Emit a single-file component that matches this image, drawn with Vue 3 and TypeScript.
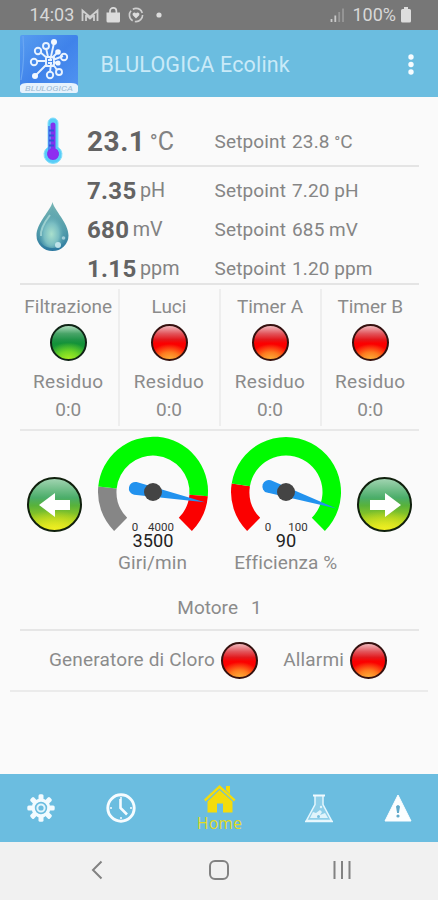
<script setup lang="ts">
interface Reading { value: string; unit: string; setpoint: string }
interface Timer { name: string; on: boolean; left: string }
interface Segment { from: number; to: number; color: string }
interface Gauge { label: string; max: number; value: number; zeroX: number; maxX: number; segments: Segment[] }

const readings: Reading[] = [
  { value: '7.35', unit: 'pH', setpoint: '7.20' },
  { value: '680', unit: 'mV', setpoint: '685' },
  { value: '1.15', unit: 'ppm', setpoint: '1.20' },
]

const timers: Timer[] = [
  { name: 'Filtrazione', on: true, left: '0:0' },
  { name: 'Luci', on: false, left: '0:0' },
  { name: 'Timer A', on: false, left: '0:0' },
  { name: 'Timer B', on: false, left: '0:0' },
]

const gauges: Gauge[] = [
  {
    label: 'Giri/min', max: 4000, value: 3500, zeroX: -18, maxX: 8,
    segments: [
      { from: 0, to: 750, color: '#868686' },
      { from: 750, to: 3400, color: '#00fb00' },
      { from: 3400, to: 4000, color: '#fb0000' },
    ],
  },
  {
    label: 'Efficienza %', max: 100, value: 90, zeroX: -18, maxX: 12,
    segments: [
      { from: 0, to: 20, color: '#fb0000' },
      { from: 20, to: 100, color: '#00fb00' },
    ],
  },
]

const angle = (g: Gauge, v: number): number => 135 + (v / g.max) * 270

function arc(g: Gauge, s: Segment): string {
  const a = (angle(g, s.from) * Math.PI) / 180
  const b = (angle(g, s.to) * Math.PI) / 180
  const p = (r: number, t: number) => `${(r * Math.cos(t)).toFixed(2)} ${(r * Math.sin(t)).toFixed(2)}`
  const large = b - a > Math.PI ? 1 : 0
  return `M${p(55, a)}A55 55 0 ${large} 1 ${p(55, b)}L${p(36.5, b)}A36.5 36.5 0 ${large} 0 ${p(36.5, a)}Z`
}
</script>

<template>
  <div class="phone">
    <header class="status">
      <span class="time">14:03</span>
      <svg class="notif" width="85" height="18" viewBox="0 0 85 18">
        <path d="M1.500 15V4.500L9 11l7.500-6.500V15M5 15V9l4 3.500 4-3.500v6" fill="none" stroke="#cfcfcf" stroke-width="1.800" />
        <path d="M25.500 6.500H39V15a1.500 1.500 0 0 1-1.500 1.500H27A1.500 1.500 0 0 1 25.500 15Z" fill="#dcdcdc" />
        <path d="M29 7V5a3.200 3.200 0 0 1 6.400 0v2" fill="none" stroke="#dcdcdc" stroke-width="1.700" />
        <circle cx="55" cy="9" r="6.600" fill="none" stroke="#cfcfcf" stroke-width="1.600" stroke-dasharray="11.500 2.300" />
        <path d="M55 12.500 51.800 9.300a1.800 1.800 0 0 1 3.200-1.800 1.800 1.800 0 0 1 3.200 1.800Z" fill="#dcdcdc" />
        <circle cx="78" cy="9" r="2.600" fill="#dcdcdc" />
      </svg>
      <svg class="signal" width="15" height="16" viewBox="0 0 15 16">
        <path d="M1.500 12v3M5.300 8.500V15" stroke="#c9c9c9" stroke-width="1.800" />
        <path d="M9.200 5v10M13 1.500V15" stroke="#989898" stroke-width="1.800" />
      </svg>
      <span class="pct">100%</span>
      <svg width="10" height="16" viewBox="0 0 10 16"><path d="M3 0h4v2h1.500A1.500 1.500 0 0 1 10 3.500V14a1.500 1.500 0 0 1-1.500 1.500h-7A1.500 1.500 0 0 1 0 14V3.500A1.500 1.500 0 0 1 1.500 2H3Z" fill="#dedede" /></svg>
    </header>

    <div class="appbar">
      <svg class="logo" width="58" height="58" viewBox="0 0 58 58">
        <defs>
          <linearGradient id="logoBg" x1="0" y1="0" x2="1" y2="1">
            <stop offset="0" stop-color="#579df0" /><stop offset=".5" stop-color="#3f82ea" /><stop offset="1" stop-color="#5295f2" />
          </linearGradient>
        </defs>
        <rect width="58" height="58" rx="2" fill="url(#logoBg)" />
        <path d="M3 1Q5 25 1 45" fill="none" stroke="#6aa6f2" stroke-width="1.200" />
        <path d="M0 51Q1 48 7 48h44q6 0 7 3v5q0 2-2 2H2q-2 0-2-2Z" fill="#e6f2fd" />
        <g stroke="#e8f3ff" stroke-width="1.900" fill="none">
          <path d="M30 26 34 8M28 22 26 13M27 23 20 17M27 26H17M27 29 16 40M31 29 30 37M33 29l4 6M33 27l4 1M33 25l10-4M32 23l6-6M26 22h8v9h-8zM28 25h4M28 28h4" />
          <circle cx="26" cy="11" r="3" /><circle cx="18" cy="16" r="3.200" /><circle cx="14" cy="27" r="3.200" />
          <circle cx="30" cy="40" r="3.200" /><circle cx="39" cy="37" r="3" /><circle cx="44" cy="22" r="3.200" />
        </g>
        <g fill="#f3f9ff"><circle cx="34" cy="7" r="3" /><circle cx="38" cy="17" r="2.800" /><circle cx="15" cy="41" r="3" /><circle cx="38" cy="28" r="2.600" /></g>
        <text x="29" y="56" text-anchor="middle" textLength="48" lengthAdjust="spacingAndGlyphs" class="logo-name">BLULOGICA</text>
      </svg>
      <h1>BLULOGICA Ecolink</h1>
      <svg width="6" height="22" viewBox="0 0 6 22" fill="#f6fcff"><circle cx="3" cy="4" r="2.700" /><circle cx="3" cy="11.500" r="2.700" /><circle cx="3" cy="19" r="2.700" /></svg>
    </div>

    <main>
      <section class="temp">
        <svg width="20" height="48" viewBox="0 0 20 48">
          <path d="M5 6a5 5 0 0 1 10 0v24a9 9 0 1 1-10 0Z" fill="#58cdf8" stroke="#86e0fb" stroke-width="1" />
          <path d="M7.500 8a2.500 2.500 0 0 1 5 0v23.500a6 6 0 1 1-5 0Z" fill="#8132ef" />
          <path d="M6 9v24" stroke="#496fee" stroke-width="1.500" />
          <path d="M6 13.500h5M6 18.500h5M6 23.500h5M6 28.500h5" stroke="#3153dc" stroke-width="1.800" />
          <circle cx="10.500" cy="37" r="5" fill="#8f2cf0" />
        </svg>
        <div class="measure"><b>23.1</b><span><i class="deg">°</i>C</span></div>
        <div class="setpoint">Setpoint 23.8<em><i class="deg">°</i>C</em></div>
      </section>

      <section class="water">
        <svg width="34" height="52" viewBox="0 0 34 52">
          <defs>
            <linearGradient id="dropEdge" x1="0" y1="0" x2="0" y2="1"><stop offset="0" stop-color="#77b5b5" /><stop offset=".55" stop-color="#539caa" /><stop offset="1" stop-color="#2b78a0" /></linearGradient>
            <radialGradient id="dropFill" cx=".47" cy=".66" r=".45"><stop offset="0" stop-color="#a9e0cd" /><stop offset=".6" stop-color="#79bdc2" /><stop offset="1" stop-color="#5ba5b2" stop-opacity=".3" /></radialGradient>
          </defs>
          <path d="M16.500 1C18 9 32.500 22 32.500 34.500a16 15.500 0 0 1-32 0C.500 22 15 9 16.500 1Z" fill="url(#dropEdge)" />
          <path d="M16.500 6C18 13 30.500 24 30 34a13.700 13 0 0 1-27.500 0C2.500 24 15 13 16.500 6Z" fill="url(#dropFill)" />
          <path d="M14 14Q4 27 5 35" fill="none" stroke="#b4dfdc" stroke-width="2" opacity=".7" />
          <circle cx="22" cy="44" r="3" fill="#c9e9f0" opacity=".9" /><circle cx="27.500" cy="37" r="1.800" fill="#c5e6ed" opacity=".7" />
        </svg>
        <div class="rows">
          <div v-for="r in readings" :key="r.unit" class="row">
            <div class="measure small"><b>{{ r.value }}</b><span>{{ r.unit }}</span></div>
            <div class="setpoint">Setpoint {{ r.setpoint }}<em>{{ r.unit }}</em></div>
          </div>
        </div>
      </section>

      <section class="timers">
        <div v-for="t in timers" :key="t.name" class="timer">
          <p>{{ t.name }}</p>
          <span class="led" :class="{ on: t.on }"></span>
          <p class="rest">Residuo</p>
          <p class="left">{{ t.left }}</p>
        </div>
      </section>

      <section class="motor">
        <div class="dials">
          <button class="arrow" type="button" aria-label="Precedente">
            <svg width="34" height="28" viewBox="0 0 34 28"><path d="M1 14 17 2v7h15v10H17v7Z" fill="#fff" /></svg>
          </button>
          <figure v-for="g in gauges" :key="g.label">
            <svg width="112" height="114" viewBox="-56 -56 112 114">
              <path v-for="s in g.segments" :key="s.from" :d="arc(g, s)" :fill="s.color" />
              <g :transform="`rotate(${angle(g, g.value)})`">
                <path d="M-18-6.500A6.500 6.500 0 0 0-18 6.500L53 0Z" fill="#2292ee" />
              </g>
              <circle r="9" fill="#444" />
              <text class="limit" :x="g.zeroX" y="38.500" text-anchor="middle">0</text>
              <text class="limit" :x="g.maxX" y="38.500" text-anchor="middle">{{ g.max }}</text>
              <text class="now" x="0" y="55" text-anchor="middle">{{ g.value }}</text>
            </svg>
            <figcaption>{{ g.label }}</figcaption>
          </figure>
          <button class="arrow" type="button" aria-label="Successivo">
            <svg width="34" height="28" viewBox="0 0 34 28"><path d="M33 14 17 2v7H2v10h15v7Z" fill="#fff" /></svg>
          </button>
        </div>
        <p class="which"><span>Motore</span><span>1</span></p>
      </section>

      <section class="alarms">
        <span>Generatore di Cloro</span><span class="led"></span>
        <span class="second">Allarmi</span><span class="led"></span>
      </section>
    </main>

    <nav class="tabs">
      <svg width="28" height="28" viewBox="-14 -14 28 28">
        <g fill="#f2fbff"><rect v-for="n in 8" :key="n" x="-2.500" y="-13.700" width="5" height="6" rx="1.500" :transform="`rotate(${n * 45})`" /></g>
        <circle r="7.800" fill="none" stroke="#f2fbff" stroke-width="3.200" />
        <circle r="3.600" fill="none" stroke="#e3f5fd" stroke-width="2" />
      </svg>
      <svg width="30" height="30" viewBox="-15 -15 30 30" fill="none" stroke="#f6fcff">
        <circle r="13.200" stroke-width="2.900" />
        <path d="M0-11v2M0 9v2M-11 0h2M9 0h2" stroke-width="1.500" />
        <path d="M-.5-9V0L6 6.500" stroke-width="2.600" />
      </svg>
      <div class="home">
        <svg width="32" height="28" viewBox="0 0 32 28" fill="#f4dc0b">
          <path d="M22 1h4v8l-4-4ZM0 14.500 15.500 0 31.500 14.500 30 16.500 15.500 3.500 1.500 16.500Z" />
          <path d="M3.500 16.500 15.500 5 28.500 16.500V27.500H19V18.500H13V27.500H3.500Z" />
        </svg>
        <span>Home</span>
      </div>
      <svg width="28" height="29" viewBox="0 0 28 29">
        <path d="M10 2v8.500L1.500 26.500h25L18 10.500V2" fill="#8fcfe9" stroke="#e4f6fd" stroke-width="1.500" />
        <path d="M8 1.500h12" stroke="#f0faff" stroke-width="2" />
        <path d="M5 24 8 18l3 1 4-3 2 2-2 3 5-2 3 5Z" fill="#e0f4fb" /><circle cx="13.500" cy="22.500" r="1.500" fill="#77bfdf" /><circle cx="16" cy="13" r="1.200" fill="#e0f4fb" />
        <path d="M0 27.500h28" stroke="#e9f8fe" stroke-width="1.500" />
      </svg>
      <svg width="28" height="28" viewBox="0 0 28 28">
        <path d="M14 1 27 27H1Z" fill="#fbfeff" stroke="#fbfeff" stroke-linejoin="round" />
        <path d="M12 12.500q2-3 4 0L14.900 19h-1.800Z" fill="#5fa9ca" /><circle cx="14" cy="22" r="1.600" fill="#5fa9ca" />
      </svg>
    </nav>

    <footer class="sysnav">
      <svg width="12" height="20" viewBox="0 0 12 20" fill="none" stroke="#828282" stroke-width="2"><path d="M10.500 1.500 2 10l8.500 8.500" /></svg>
      <svg class="sq" width="20" height="20" viewBox="0 0 20 20" fill="none" stroke="#828282" stroke-width="2"><rect x="1" y="1" width="18" height="18" rx="5" /></svg>
      <svg width="18" height="20" viewBox="0 0 18 20" stroke="#828282" stroke-width="2"><path d="M1.500 1v18M9 1v18M16.500 1v18" /></svg>
    </footer>
  </div>
</template>

<style>
body { margin: 0; background: #fafafa; }
</style>

<style scoped>
.phone {
  width: 438px; height: 900px; display: flex; flex-direction: column; overflow: hidden;
  background: #fafafa; color: #8b8b8b; font: 19px/24px Roboto, "Liberation Sans", sans-serif;
}
.phone svg { display: block; flex: none; overflow: visible; }
p, h1, figure { margin: 0; }
section { box-sizing: border-box; flex: none; }

.status { height: 30px; flex: none; display: flex; align-items: center; padding: 0 27px 0 29.500px; background: #777; color: #d8d8d8; font-size: 18px; }
.notif { margin-left: 7px; }
.signal { margin-left: auto; }
.pct { margin: 0 5px 0 7px; }

.appbar { height: 67px; flex: none; display: flex; align-items: center; padding: 0 24px 0 20px; background: #6bbde0; box-sizing: border-box; }
.logo-name { font: italic 7px Roboto, sans-serif; fill: #9db9d2; }
.appbar h1 { flex: 1; margin: 3px 0 0 22.500px; font-size: 21.500px; font-weight: 400; color: #c9eaf8; letter-spacing: .16px; }

main { flex: 1; display: flex; flex-direction: column; }
.temp { height: 70px; margin: 0 19px 0 20px; padding: 20px 0 0 23px; border-bottom: 2px solid #e4e4e4; display: flex; align-items: flex-start; }
.temp .measure { margin: 13px 0 0 24px; }
.temp .setpoint { margin-top: 13px; }
.measure { width: 127.500px; display: flex; align-items: center; color: #828282; font-size: 25px; }
.measure b { font-size: 28px; font-weight: 700; color: #636363; letter-spacing: .5px; }
.measure span { margin-left: 4.500px; }
.measure.small { font-size: 19.800px; }
.measure.small b { font-size: 24px; letter-spacing: .3px; }
.measure.small span { margin-left: 3.500px; }
.setpoint { color: #858585; letter-spacing: .15px; word-spacing: 1px; }
em { font-style: normal; margin-left: 4.500px; }
.deg { font-style: normal; font-size: .85em; line-height: 1; }

.water { height: 118px; margin: 0 19px 0 20px; padding: 4px 0 0 16px; border-bottom: 2px solid #e4e4e4; display: flex; }
.water > svg { margin-top: 30px; }
.rows { margin-left: 17px; }
.row { height: 39px; display: flex; align-items: center; }

.timers { height: 146px; margin: 0 19px 0 20px; padding-top: 4px; border-bottom: 2px solid #e8e8e8; display: grid; grid-template-columns: 97.500px 101px 101px 99.500px; }
.timer { height: 137px; display: flex; flex-direction: column; align-items: center; }
.timer:first-child { padding-right: 1px; }
.timer + .timer { border-left: 2px solid #eee; }
.timer p { margin-top: 5.500px; }
.timer .led { margin-top: 5.500px; }
.timer .rest { margin-top: 8.500px; letter-spacing: .3px; }
.timer .left { margin-top: 4px; }

.led { flex: none; box-sizing: border-box; width: 37px; height: 37px; border: 2px solid #35110f; border-radius: 50%;
  background: radial-gradient(ellipse 58% 44% at 50% 98%, #fdb53c 0, #fd7a20 50%, transparent 100%) border-box, linear-gradient(#f0b4b8 6%, #e2555b 26%, #e3181c 42%, #fb0000 52%, #fb0a00) border-box; }
.led.on { border-color: #102416;
  background: radial-gradient(ellipse 62% 48% at 50% 98%, #b2f022 0, #70d626 50%, transparent 100%) border-box, linear-gradient(#a9dab9 6%, #48a468 26%, #229449 42%, #149239 52%, #20a535) border-box; }

.motor { height: 200px; margin: 0 19px 0 20px; padding-top: 5px; border-bottom: 2px solid #e6e6e6; }
.dials { display: grid; grid-template-columns: 69px 127px 139.500px 56px; height: 140px; }
.arrow { width: 55px; height: 55px; margin: 41px 0 0 7px; padding: 0; border: 2.500px solid #10200d; border-radius: 50%; display: grid; place-items: center; box-sizing: border-box;
  background: radial-gradient(ellipse 65% 38% at 50% 98%, #f2ef22, transparent) border-box, linear-gradient(#9dd2ae 5%, #4aad69 38%, #58b23a 52%, #9acb20 75%, #d2e31c) border-box; }
.arrow:last-child { margin-left: 1.500px; }
figure { display: flex; flex-direction: column; align-items: center; }
figcaption { letter-spacing: .1px; margin-top: .5px; }
.limit { font-size: 11.500px; fill: #333; }
.now { font-size: 18.200px; fill: #222; }
.which { display: flex; justify-content: center; gap: 13px; margin-top: 20px; }

.alarms { height: 61px; margin: 0 10px; padding: 0 41px 1px 39px; border-bottom: 2px solid #ebebeb; display: flex; align-items: center; }
.alarms span { letter-spacing: .16px; }
.alarms .led { margin-left: 6px; }
.alarms .second { margin-left: auto; }

.tabs { height: 68px; flex: none; display: grid; grid-template-columns: 81px 80px 117.500px 80px 79.500px; place-items: center; background: #6bbde0; }
.home { display: flex; flex-direction: column; align-items: center; }
.home span { font: 15.500px/18px "Open Sans", "Noto Sans", sans-serif; color: #e4db20; margin-top: 1px; letter-spacing: .4px; }
.sysnav { height: 58px; flex: none; display: flex; align-items: center; justify-content: space-between; padding: 0 87px 2px 91px; box-sizing: border-box; background: #f1f1f1; }
.sq { margin-left: 2px; }
</style>
